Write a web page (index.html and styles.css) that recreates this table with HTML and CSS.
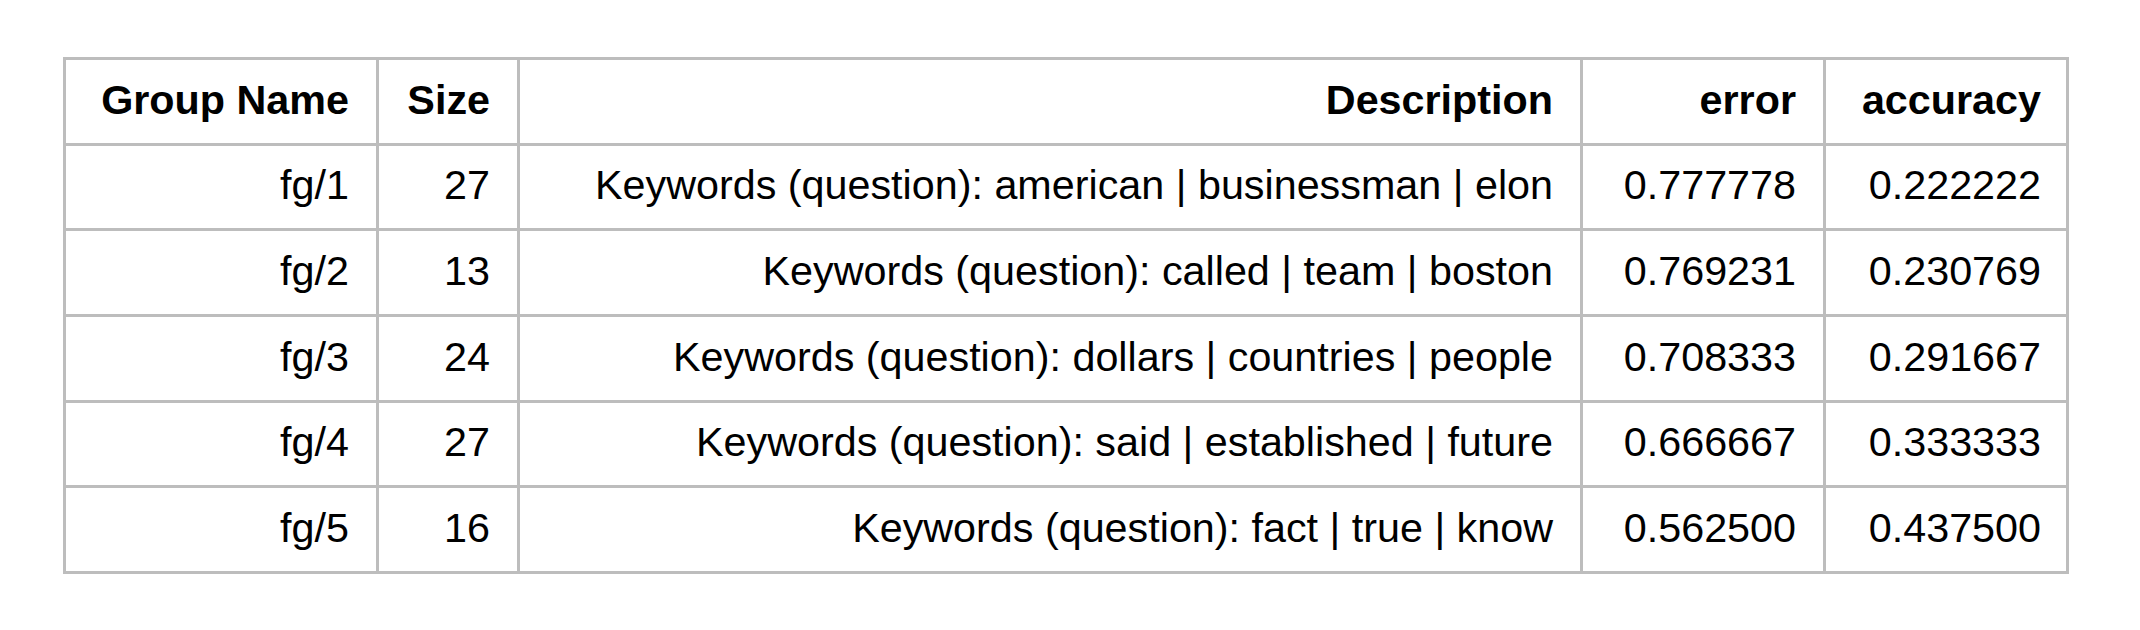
FILE: index.html
```html
<!DOCTYPE html>
<html lang="en">
<head>
<meta charset="utf-8">
<title>Groups</title>
<link rel="stylesheet" href="styles.css">
</head>
<body>
<div class="table">
  <div class="cell head">Group Name</div>
  <div class="cell head">Size</div>
  <div class="cell head">Description</div>
  <div class="cell head">error</div>
  <div class="cell head last">accuracy</div>

  <div class="cell">fg/1</div>
  <div class="cell">27</div>
  <div class="cell">Keywords (question): american | businessman | elon</div>
  <div class="cell">0.777778</div>
  <div class="cell last">0.222222</div>

  <div class="cell">fg/2</div>
  <div class="cell">13</div>
  <div class="cell">Keywords (question): called | team | boston</div>
  <div class="cell">0.769231</div>
  <div class="cell last">0.230769</div>

  <div class="cell">fg/3</div>
  <div class="cell">24</div>
  <div class="cell">Keywords (question): dollars | countries | people</div>
  <div class="cell">0.708333</div>
  <div class="cell last">0.291667</div>

  <div class="cell">fg/4</div>
  <div class="cell">27</div>
  <div class="cell">Keywords (question): said | established | future</div>
  <div class="cell">0.666667</div>
  <div class="cell last">0.333333</div>

  <div class="cell">fg/5</div>
  <div class="cell">16</div>
  <div class="cell">Keywords (question): fact | true | know</div>
  <div class="cell">0.562500</div>
  <div class="cell last">0.437500</div>
</div>
</body>
</html>
```
FILE: styles.css
```css
html, body {
  margin: 0;
  padding: 0;
  background: #ffffff;
}
body {
  padding: 57px 0 0 63px;
  font-family: "Liberation Sans", Arial, sans-serif;
  color: #000000;
}
.table {
  display: inline-grid;
  grid-template-columns: 310px 138px 1060px 240px 240px;
  grid-auto-rows: 82.67px;
  gap: 3px;
  padding: 3px;
  background: #bdbdbd;
}
.cell {
  background: #ffffff;
  display: flex;
  align-items: center;
  justify-content: flex-end;
  padding: 0 27px 2px 10px;
  font-size: 41.3px;
  white-space: nowrap;
}
.last {
  padding-right: 25px;
}
.head {
  font-weight: bold;
}
```
